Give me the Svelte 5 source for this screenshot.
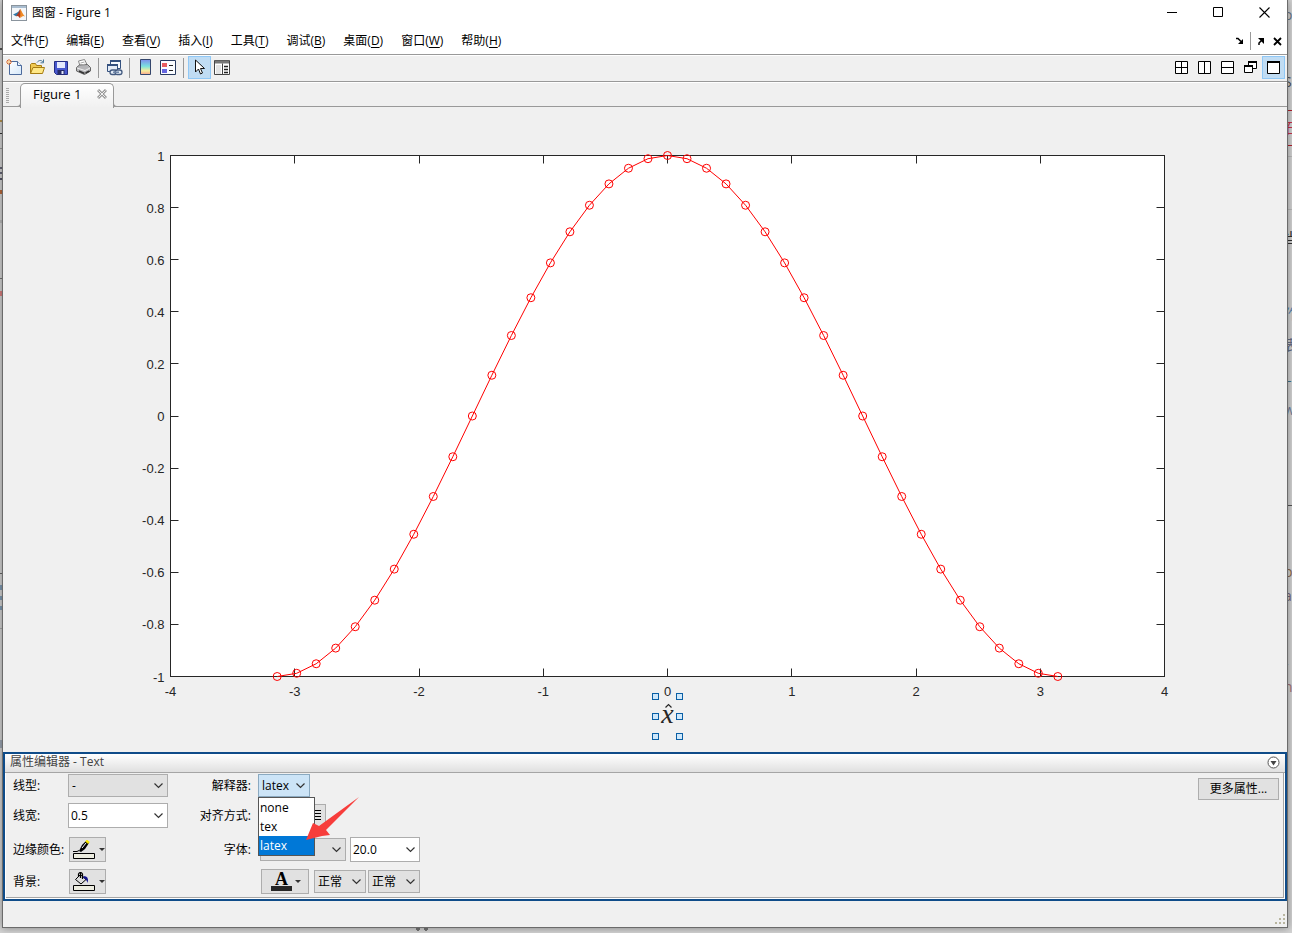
<script>
  const menus = [
    ['文件', 'F'], ['编辑', 'E'], ['查看', 'V'], ['插入', 'I'], ['工具', 'T'],
    ['调试', 'B'], ['桌面', 'D'], ['窗口', 'W'], ['帮助', 'H']
  ];
  const interpreters = ['none', 'tex', 'latex'];
  let interpreter = $state('latex');

  // Size of the figure canvas; the axes are placed as fractions of it.
  let w = $state(1284);
  let h = $state(645);
  const left = $derived(Math.round(w * 0.13) + 0.5);
  const right = $derived(Math.round(w * 0.904) + 0.5);
  const top = $derived(Math.round(h * 0.075) + 0.5);
  const bottom = $derived(Math.floor(h * 0.883) + 0.5);
  const px = (v) => left + ((v + 4) / 8) * (right - left);
  const py = (v) => bottom - ((v + 1) / 2) * (bottom - top);
  const snap = (v) => Math.floor(v) + 0.5;

  const xTicks = [-4, -3, -2, -1, 0, 1, 2, 3, 4];
  const yTicks = [-1, -0.8, -0.6, -0.4, -0.2, 0, 0.2, 0.4, 0.6, 0.8, 1];
  const samples = Array.from({ length: 41 }, (_, i) => {
    const x = -Math.PI + (i * Math.PI) / 20;
    return { x, y: Math.cos(x) };
  });
  const curve = $derived(samples.map((p) => `${px(p.x)},${py(p.y)}`).join(' '));
  const handles = [[-12, 20], [12, 20], [-12, 40], [12, 40], [-12, 60], [12, 60]];

  // Parts of the page behind the window that stay visible at its edges.
  const leftMarks = [
    [48, 2, '#555'], [120, 2, '#b8944d'], [133, 1, '#333'], [148, 1, '#999'], [167, 2, '#667'], [172, 2, '#667'],
    [178, 2, '#556'], [190, 4, '#b96a3c'], [220, 3, '#bbb'], [278, 1, '#777'], [291, 5, '#d98080'],
    [573, 1, '#666'], [585, 5, '#809bb4'], [596, 4, '#809bb4'], [606, 4, '#809bb4'], [628, 1, '#aaa'], [740, 8, '#9da7b4']
  ];
  const rightTexts = [
    [7, 'o', '#68798c'], [74, 'S', '#4a5158'], [120, '石', '#c8324a'], [230, '当', '#333'],
    [306, '作', '#5784b0'], [337, '表', '#666f88'], [369, 'L', '#3f748b'], [402, 'w', '#7081a0'],
    [564, 'p', '#8a6a50'], [588, 'a', '#72657b'], [656, '-', '#765f63'], [679, 'n', '#a07078']
  ];
  const rightLines = [[110, '#b3202d'], [145, '#b3202d'], [156, '#bbb'], [209, '#bbb'], [505, '#555']];
</script>

<div class="desktop">
  <div class="behind" aria-hidden="true">
    {#each leftMarks as [y, size, color]}
      <i class="mark" style="top:{y}px;height:{size}px;background:{color}"></i>
    {/each}
    {#each rightTexts as [y, t, color]}
      <span class="sliver" style="top:{y}px;color:{color}">{t}</span>
    {/each}
    {#each rightLines as [y, color]}
      <i class="rule" style="top:{y}px;background:{color}"></i>
    {/each}
    <i class="dots"></i>
  </div>

  <main class="window">
    <header class="titlebar">
      <svg class="logo" width="16" height="16" viewBox="0 0 16 16">
        <rect x=".5" y=".5" width="15" height="15" fill="#f4f7fa" stroke="#8a949d" />
        <path d="M1 2h14" stroke="#a9bdd0" stroke-width="2" />
        <path d="M2 9.500 5.200 8l2.200-1.200L9 4 7.500 9.800 5 11.300z" fill="#2f78a8" />
        <path d="M5 11.300 7.200 8 9.200 4l1.800 5-2.400 4-1.500-2z" fill="#b13a1e" />
        <path d="M9.200 4c1.200 1 2 4.500 4.800 7.500-1.500-1-2.700-.6-4.700 1.700z" fill="#ef8a25" />
      </svg>
      <h1>图窗 - Figure 1</h1>
      <div class="caption">
        <button aria-label="最小化"><svg width="11" height="11"><path d="M0 5.500h10" stroke="#000" /></svg></button>
        <button aria-label="最大化"><svg width="11" height="11"><path d="M.5.500h9v9h-9z" fill="none" stroke="#000" /></svg></button>
        <button aria-label="关闭"><svg width="11" height="11"><path d="m.5.500 10 10m0-10-10 10" stroke="#000" stroke-width="1.100" /></svg></button>
      </div>
    </header>

    <nav class="menubar">
      {#each menus as [name, key]}
        <button>{name}(<u>{key}</u>)</button>
      {/each}
      <div class="dock">
        <button aria-label="停靠"><svg width="8" height="8"><path d="M0 1.500h2l3 3" fill="none" stroke="#000" stroke-width="1.500" /><path d="M7 2v5H2z" /></svg></button>
        <i class="bar"></i>
        <button aria-label="取消停靠"><svg width="8" height="8"><path d="M1 1h6v6z" /><path d="M5 3 2 6v2" fill="none" stroke="#000" stroke-width="1.500" /></svg></button>
        <button aria-label="关闭图窗"><svg width="9" height="9"><path d="m1 1 7 7m0-7-7 7" stroke="#000" stroke-width="1.800" /></svg></button>
      </div>
    </nav>

    <div class="toolbar">
      <button aria-label="新建图窗"><svg width="17" height="17" viewBox="0 0 17 17"><defs><linearGradient id="sheet" x2="1" y2="1"><stop stop-color="#fff" /><stop offset="1" stop-color="#d5e8fa" /></linearGradient></defs><path d="M3.500 2.500h8l4 4v9h-12z" fill="url(#sheet)" stroke="#4c6a9c" /><path d="M11.500 2.500v4h4" fill="#eef5fd" stroke="#4c6a9c" /><path d="M3 0v6M0 3h6M1 1l4 4m0-4L1 5" stroke="#d9682f" /><circle cx="3" cy="3" r="1.300" fill="#ffd79b" /></svg></button>
      <button aria-label="打开文件"><svg width="17" height="17" viewBox="0 0 17 17"><path d="M1.500 14.500v-9l1-1h4l1 2h5v3" fill="#f0c951" stroke="#a67c13" /><path d="m1.500 14.500 2.500-6h11.500l-2 6z" fill="#ffe886" stroke="#a67c13" /><path d="M8 3.500C10 .8 12.500 1 14 3m.5-2.500v3.300h-3" fill="none" stroke="#497799" /></svg></button>
      <button aria-label="保存图窗"><svg width="16" height="16" viewBox="0 0 16 16"><path d="M1.500 1.500h13v13h-11l-2-2z" fill="#4858cf" stroke="#252d83" /><path d="M4 2h8v6H4z" fill="#e4e9fd" /><path d="M4.500 10h7v4.500h-7z" fill="#272c67" /><path d="M8.500 11h2v3h-2z" fill="#e4e9fd" /></svg></button>
      <button aria-label="打印图窗"><svg width="17" height="17" viewBox="0 0 17 17"><path d="m5 7-1.500-5 6-1.500 3 6" fill="#fff" stroke="#888" /><path d="m1.500 8.500 3-2.500 8-.5 3 3v3.500l-6 3.500-8-3.500z" fill="#b5b5b8" stroke="#666" /><path d="m2 9 8 2.500 5-2.500" fill="none" stroke="#eee" /><path d="m4 12 5.500 2.500m1-.5 4-2" stroke="#333" stroke-width="1.400" /><path d="m5.500 4 4-1m-3 3 4-1" stroke="#aaa" /></svg></button>
      <i class="bar"></i>
      <button aria-label="链接绘图"><svg width="17" height="17" viewBox="0 0 17 17"><path d="M4.500 1.500h10v8h-10z" fill="#f7fbff" stroke="#34517f" /><path d="M4 2h11" stroke="#34517f" stroke-width="2" /><path d="M1.500 5.500h10v7h-10z" fill="#e5edf7" stroke="#34517f" /><path d="M1 6h11" stroke="#34517f" stroke-width="2" /><rect x="4" y="11" width="7" height="4.500" rx="2.200" fill="#e5edf7" stroke="#445b80" stroke-width="1.300" /><rect x="9" y="11" width="7" height="4.500" rx="2.200" fill="#e5edf7" stroke="#445b80" stroke-width="1.300" /><path d="M7 13.200h6" stroke="#6c83a6" stroke-width="1.500" /></svg></button>
      <i class="bar"></i>
      <button aria-label="插入颜色栏"><svg width="11" height="17" viewBox="0 0 11 17"><defs><linearGradient id="jet" x2="0" y2="1"><stop stop-color="#7f8cee" /><stop offset=".45" stop-color="#7ae1df" /><stop offset=".75" stop-color="#f8ed9b" /><stop offset="1" stop-color="#f7a58e" /></linearGradient></defs><path d="M.5.500h10v15H.5z" fill="url(#jet)" stroke="#34466c" /></svg></button>
      <button aria-label="插入图例"><svg width="17" height="16" viewBox="0 0 17 16"><path d="M.5.500h15v14H.5z" fill="#fafcff" stroke="#27395e" /><path d="M2 3h5v4H2z" fill="#e85d60" /><path d="M2 9h5v4H2z" fill="#6666e0" /><path d="M9 5.500h4M9 10.500h4" stroke="#222" /></svg></button>
      <i class="bar"></i>
      <button class="active" aria-label="编辑绘图"><svg width="11" height="17" viewBox="0 0 11 17"><path d="M1.500 1v12l3-3 2 5 2-1-2-4.500h4z" fill="#fff" stroke="#111" /></svg></button>
      <button aria-label="属性检查器"><svg width="17" height="17" viewBox="0 0 17 17"><path d="M.5 1.500h15v14H.5z" fill="#fff" stroke="#444" /><path d="M1 3h14" stroke="#777" stroke-width="3" /><path d="M8.500 4.500v11" stroke="#444" /><path d="M10 7.500h4m-4 3h4m-4 3h4" stroke="#222" stroke-width="1.300" /><path d="M2 6h5v9H2z" fill="#e4e4e4" /></svg></button>
      <div class="tiles">
        <button aria-label="平铺"><svg width="13" height="13"><path d="M.5.500h12v12H.5zM6.500 0v13M0 6.500h13" fill="#fff" stroke="#000" /></svg></button>
        <button aria-label="左右平铺"><svg width="13" height="13"><path d="M.5.500h12v12H.5zM6.500 0v13" fill="#fff" stroke="#000" /></svg></button>
        <button aria-label="上下平铺"><svg width="13" height="13"><path d="M.5.500h12v12H.5zM0 6.500h13" fill="#fff" stroke="#000" /></svg></button>
        <button aria-label="浮动"><svg width="13" height="13"><path d="M4.500 1.500h8v6h-8z" fill="#fff" stroke="#000" /><path d="M4 1h9" stroke="#000" stroke-width="2" /><path d="M.5 5.500h8v6h-8z" fill="#fff" stroke="#000" /><path d="M0 5h9" stroke="#000" stroke-width="2" /></svg></button>
        <button class="active" aria-label="最大化文档"><svg width="13" height="13"><path d="M.5.500h12v12H.5z" fill="#fff" stroke="#000" /><path d="M0 1h13" stroke="#000" stroke-width="2" /></svg></button>
      </div>
    </div>

    <div class="tabs">
      <i class="grip"></i>
      <div class="tab">
        <span>Figure 1</span>
        <button aria-label="关闭选项卡"><svg width="10" height="10"><path d="m1 1 8 8m0-8-8 8" stroke="#999" stroke-width="3" /><path d="m1.500 1.500 7 7m0-7-7 7" stroke="#f0f0f0" stroke-width="1" /></svg></button>
      </div>
    </div>

    <section class="figure" bind:clientWidth={w} bind:clientHeight={h}>
      <svg class="plot" viewBox="0 0 {w} {h}">
        <rect x={left} y={top} width={right - left} height={bottom - top} fill="#fff" stroke="#262626" />
        {#each xTicks as t}
          <path d="M{snap(px(t))} {bottom}v-8M{snap(px(t))} {top}v8" stroke="#262626" />
          <text x={px(t)} y={bottom + 19} text-anchor="middle">{t}</text>
        {/each}
        {#each yTicks as t}
          <path d="M{left} {snap(py(t))}h8M{right} {snap(py(t))}h-8" stroke="#262626" />
          <text x={left - 6} y={py(t) + 5} text-anchor="end">{t}</text>
        {/each}
        <polyline points={curve} fill="none" stroke="#f00" />
        {#each samples as p}
          <circle cx={px(p.x)} cy={py(p.y)} r="4" fill="none" stroke="#f00" />
        {/each}
        <text class="math" x={snap(px(0))} y={bottom + 46} text-anchor="middle">x</text>
        <path d="M{snap(px(0)) - 2} {bottom + 31}l3-3 3 3" fill="none" stroke="#262626" stroke-width="1.200" />
        {#each handles as [dx, dy]}
          <rect x={snap(px(0)) + dx - 3} y={bottom + dy - 3} width="6" height="6" fill="#cfe8fb" stroke="#0a5fa5" />
        {/each}
      </svg>
    </section>

    <section class="panel">
      <div class="panel-head">
        <h2>属性编辑器 - Text</h2>
        <button aria-label="面板菜单"><svg width="13" height="13"><circle cx="6.500" cy="6.500" r="5.500" fill="#fff" stroke="#555" /><path d="M3.500 5h6l-3 4.500z" fill="#444" /></svg></button>
      </div>
      <div class="props">
        <div class="grid line-grid">
          <label for="style">线型:</label>
          <select id="style" class="wide"><option>-</option></select>
          <label for="width">线宽:</label>
          <div class="combo wide"><input id="width" value="0.5" /><button aria-label="选择线宽"></button></div>
          <label for="edge">边缘颜色:</label>
          <button id="edge" class="swatch">
            <svg width="23" height="19" viewBox="0 0 23 19"><path d="M.5 13.500h21v5H.5z" fill="#ecece0" stroke="#000" /><path d="M0 11.500h4l2-1" fill="none" stroke="#000" /><path d="m6 11 3-6 4-4 3 2-4 6-4 3z" fill="#000" /><path d="m9 8 4-5" stroke="#fff" /><path d="m13 .5 3 2.500" stroke="#f5e500" stroke-width="2.500" /></svg>
            <i class="caret"></i>
          </button>
          <label for="back">背景:</label>
          <button id="back" class="swatch">
            <svg width="23" height="19" viewBox="0 0 23 19"><path d="M.5 13.500h21v5H.5z" fill="#ecece0" stroke="#000" /><path d="m2.500 7.500 5-5 5.500 5-5 4.500z" fill="#ddd" stroke="#000" /><path d="M5.500 5V2Q7.500-1 9.500 2v5M7.500 1v5" fill="none" stroke="#000" stroke-width="1.200" /><path d="M10.500 4q6 0 4 7-1-4-4-5z" fill="#11118f" /></svg>
            <i class="caret"></i>
          </button>
        </div>

        <div class="grid text-grid">
          <label for="interp">解释器:</label>
          <div class="drop">
            <select id="interp" bind:value={interpreter}>
              {#each interpreters as name}<option>{name}</option>{/each}
            </select>
            <div class="list" role="listbox" aria-label="解释器">
              {#each interpreters as name}
                <button role="option" aria-selected={name === interpreter} onclick={() => (interpreter = name)}>{name}</button>
              {/each}
            </div>
            <svg class="pointer" width="56" height="46" viewBox="0 0 56 46"><path d="M1 44 8 27l6 3L54 1 21 34l4 5-8 1z" fill="#f73d3b" /></svg>
          </div>
          <span class="label">对齐方式:</span>
          <div class="cells align">
            {#each ['左对齐', '居中', '右对齐'] as name}
              <button aria-label={name}><svg width="11" height="12"><path d="M0 .5h11M0 3.500h11M0 6.500h11M0 9.500h11" stroke="#000" /></svg></button>
            {/each}
          </div>
          <label for="font">字体:</label>
          <div class="cells">
            <select id="font" class="font"><option></option></select>
            <div class="combo size"><input aria-label="字号" value="20.0" /><button aria-label="选择字号"></button></div>
          </div>
          <span></span>
          <div class="cells last">
            <button class="color" aria-label="字体颜色"><span>A</span><i class="caret"></i></button>
            <select aria-label="粗细"><option>正常</option></select>
            <select aria-label="角度"><option>正常</option></select>
          </div>
        </div>
        <button class="more">更多属性...</button>
      </div>
    </section>

    <footer class="status">
      <svg width="11" height="11"><path d="M8 0h2v2H8zM8 4h2v2H8zM4 4h2v2H4zM8 8h2v2H8zM4 8h2v2H4zM0 8h2v2H0z" fill="#b8b5a0" /></svg>
    </footer>
  </main>
</div>

<style>
  :global(body) { margin: 0; }
  * { box-sizing: border-box; }
  .desktop {
    position: relative;
    display: flex;
    height: 100vh;
    min-height: 560px;
    padding: 0 4px 5px 2px;
    overflow: hidden;
    background: #d4d4d4;
    font: 12px/16px "Open Sans", "Noto Sans CJK SC", sans-serif;
    color: #000;
  }
  .behind { position: absolute; inset: 0; }
  .mark { position: absolute; left: 0; width: 2px; }
  .sliver { position: absolute; left: calc(100% - 8px); font-size: 14px; }
  .rule { position: absolute; right: 0; width: 4px; height: 1px; }
  .dots { position: absolute; left: 414px; bottom: 2px; width: 16px; height: 4px; background: radial-gradient(circle, #777 2px, transparent 2px) 0 0 / 8px 4px; }
  button { margin: 0; padding: 0; border: 0; background: none; font: inherit; color: inherit; }
  svg { display: block; }
  .window {
    position: relative;
    display: flex;
    flex: 1;
    flex-direction: column;
    min-width: 0;
    border: 1px solid #6b6b6b;
    border-top: 0;
    background: #f0f0f0;
    box-shadow: 0 0 8px #0006;
  }
  .titlebar { display: flex; align-items: center; height: 26px; padding: 0 0 1px 8px; background: #fff; }
  h1 { flex: 1; margin: 0 0 0 5px; font-size: 12px; font-weight: 400; }
  .caption { display: flex; height: 100%; }
  .caption button { display: grid; place-items: center; width: 46px; }
  .menubar { display: flex; align-items: center; gap: 18px; height: 29px; padding: 2px 5px 0 8px; border-bottom: 1px solid #999; background: #fff; white-space: nowrap; }
  .menubar u { text-underline-offset: 2px; }
  .dock { display: flex; align-items: center; gap: 6px; margin-left: auto; }
  .dock button:last-child { margin-left: 2px; }
  .dock .bar { height: 18px; margin: 0; }
  .bar { width: 1px; height: 20px; margin: 0 4px 0 3px; background: #999; }
  .toolbar { display: flex; align-items: center; height: 27px; padding: 0 2px 2px 0; border-top: 1px solid #fff; border-bottom: 1px solid #999; }
  .toolbar button { display: grid; flex: none; place-items: center; width: 23px; height: 23px; }
  .toolbar .active { border: 1px solid #90c8f6; background: #c0dcf3; }
  .tiles { display: flex; margin-left: auto; }
  .tabs { display: flex; height: 25px; border-top: 1px solid #fff; border-bottom: 1px solid #999; }
  .grip { width: 3px; height: 15px; margin: 5px 11px 0 3px; background: repeating-linear-gradient(#aaa 0 1px, transparent 1px 2px); }
  .tab {
    position: relative;
    display: flex;
    align-items: center;
    gap: 16px;
    height: 25px;
    padding: 0 6px 4px 12px;
    border: 1px solid #999;
    border-bottom: 0;
    border-radius: 5px 5px 0 0;
    background: linear-gradient(#fff, #f0f0f0);
    font-size: 13px;
  }
  .tab::before, .tab::after { content: ""; position: absolute; bottom: 1px; width: 4px; height: 4px; border-bottom: 1px solid #999; }
  .tab::before { right: 100%; border-right: 1px solid #999; border-bottom-right-radius: 4px; }
  .tab::after { left: 100%; border-left: 1px solid #999; border-bottom-left-radius: 4px; }
  .figure { flex: 1 1 0; min-height: 240px; overflow: hidden; }
  .plot { width: 100%; height: 100%; }
  .plot text { font: 13px "Liberation Sans", sans-serif; fill: #262626; }
  .plot .math { font: italic 28px "Liberation Serif", serif; }
  .panel { border: 2px solid #0f4c89; background: #fff; }
  .panel-head { display: flex; align-items: center; justify-content: space-between; height: 19px; padding: 0 5px 2px 5px; border-bottom: 1px solid #a5a5a5; background: linear-gradient(#fff, #e0e0e0); color: #444; }
  h2 { margin: 0; font-size: 12px; font-weight: 400; }
  .props { display: flex; align-items: flex-start; margin: 0 1px 1px; border: 1px solid #a5a5a5; border-width: 0 1px 1px 0; background: #f0f0f0; }
  .grid { display: grid; grid-template-rows: 25px 35px 33px 31px; align-items: center; white-space: nowrap; }
  .line-grid { grid-template-columns: 55px 100px; padding-left: 7px; }
  .text-grid { grid-template-columns: 60px auto; column-gap: 7px; margin-left: 23px; }
  .text-grid > label, .label { text-align: right; }
  select {
    appearance: none;
    height: 23px;
    margin: 0;
    padding: 0 3px;
    border: 1px solid #adadad;
    border-radius: 0;
    background: #e1e1e1 url("data:image/svg+xml,%3Csvg xmlns='http://www.w3.org/2000/svg' width='9' height='6'%3E%3Cpath d='m.5.500 4 4 4-4' fill='none' stroke='%23333' stroke-width='1.200'/%3E%3C/svg%3E") no-repeat right 4px center;
    font: inherit;
    color: inherit;
  }
  .wide { width: 100px; }
  .combo { display: flex; height: 25px; border: 1px solid #adadad; background: #fff; }
  .combo input { flex: 1; min-width: 0; padding: 0 2px; border: 0; background: none; font: inherit; outline: 0; }
  .combo button { width: 18px; background: url("data:image/svg+xml,%3Csvg xmlns='http://www.w3.org/2000/svg' width='9' height='6'%3E%3Cpath d='m.5.500 4 4 4-4' fill='none' stroke='%23333' stroke-width='1.200'/%3E%3C/svg%3E") no-repeat center; }
  .swatch, .color { display: flex; align-items: center; gap: 5px; width: 37px; height: 25px; border: 1px solid #adadad; background: #e1e1e1; }
  .swatch { gap: 3px; margin-left: 1px; padding-left: 3px; }
  .caret { flex: none; border: 3px solid transparent; border-top-color: #333; border-bottom: 0; }
  .drop { position: relative; }
  .drop select { display: block; width: 52px; border-color: #8aa9c0; background-color: #cce4f7; }
  .list { position: absolute; z-index: 1; top: 23px; left: 0; width: 57px; border: 1px solid #555; background: #fff; }
  .list button { display: block; width: 100%; height: 19px; padding-left: 1px; text-align: left; }
  .list [aria-selected="true"] { background: #0078d7; color: #fff; }
  .pointer { position: absolute; z-index: 2; top: 22px; left: 47px; }
  .cells { display: flex; align-items: center; gap: 4px; padding-left: 2px; }
  .align { gap: 0; }
  .align button { display: grid; place-items: center; width: 22px; height: 23px; border: 1px solid #adadad; background: #e1e1e1; }
  .font { width: 86px; }
  .size { width: 70px; }
  .last { gap: 2px; padding-left: 3px; }
  .last select { width: 52px; }
  .color { gap: 3px; width: 48px; margin-right: 3px; padding-left: 9px; }
  .color span { width: 21px; height: 18px; border-bottom: 5px solid #262626; font: bold 18px/13px "Liberation Serif", serif; text-align: center; }
  .more { flex: none; width: 81px; height: 22px; margin: 5px 4px 0 auto; border: 1px solid #adadad; background: #e1e1e1; }
  .status { display: flex; align-items: flex-end; justify-content: flex-end; height: 26px; padding: 0 1px 2px; }
</style>
